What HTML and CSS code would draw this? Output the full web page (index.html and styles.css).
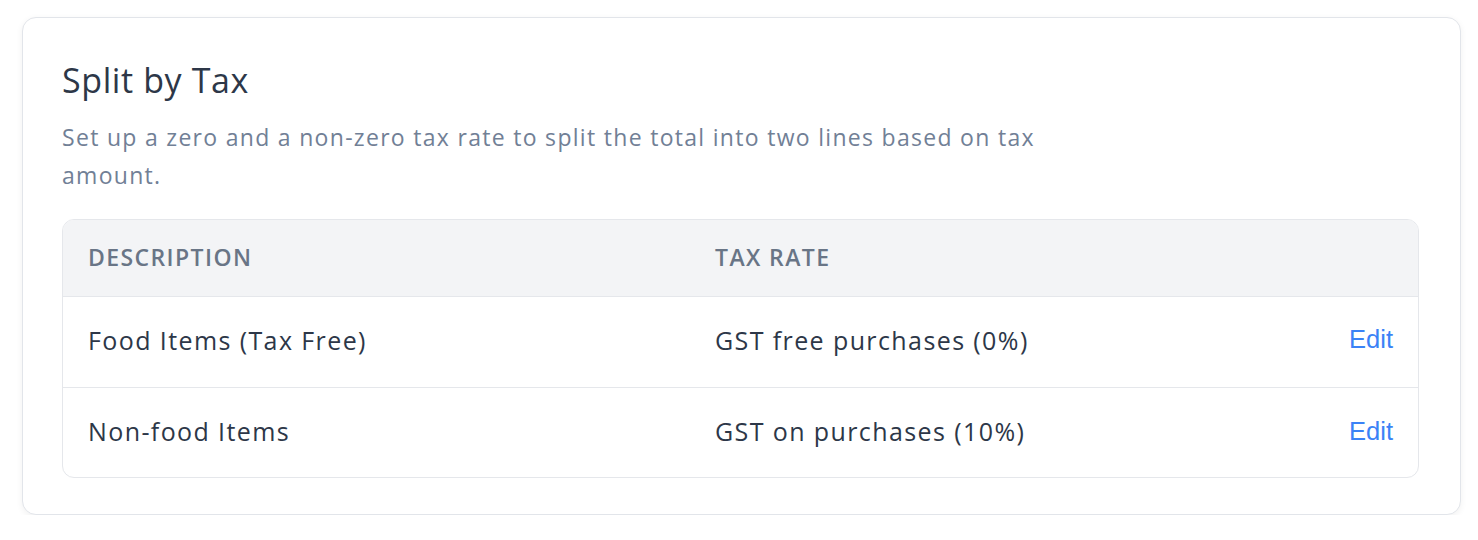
FILE: index.html
```html
<!DOCTYPE html>
<html lang="en">
<head>
<meta charset="utf-8">
<title>Split by Tax</title>
<link rel="stylesheet" href="styles.css">
</head>
<body>
<div class="page">
  <section class="card">
    <h2 class="title">Split by Tax</h2>
    <p class="desc">Set up a zero and a non-zero tax rate to split the total into two lines based on tax amount.</p>
    <div class="table">
      <div class="row head">
        <div class="c-desc">Description</div>
        <div class="c-rate">Tax rate</div>
        <div class="c-act"></div>
      </div>
      <div class="row">
        <div class="c-desc">Food Items (Tax Free)</div>
        <div class="c-rate">GST free purchases (0%)</div>
        <div class="c-act"><a class="edit" href="#">Edit</a></div>
      </div>
      <div class="row">
        <div class="c-desc">Non-food Items</div>
        <div class="c-rate">GST on purchases (10%)</div>
        <div class="c-act"><a class="edit" href="#">Edit</a></div>
      </div>
    </div>
  </section>
</div>
</body>
</html>
```
FILE: styles.css
```css
* { box-sizing: border-box; }
html, body { margin: 0; padding: 0; background: #ffffff; }
body { font-family: "Open Sans", "Noto Sans", sans-serif; color: #2d3748; }
.page { padding: 17px 17px 0 22px; }
.card {
  background: #fff;
  border: 1px solid #e2e5ea;
  border-radius: 14px;
  box-shadow: 0 2px 7px rgba(0,0,0,0.06);
  padding: 36px 41px 36px 39px;
}
.title {
  margin: 0;
  font-size: 34px;
  font-weight: 400;
  line-height: 52px;
  letter-spacing: 0.6px;
  color: #2d3748;
}
.desc {
  margin: 12px 0 25px;
  max-width: 1008px;
  font-size: 23px;
  line-height: 38px;
  letter-spacing: 1.3px;
  color: #718096;
}
.table {
  border: 1px solid #e5e7eb;
  border-radius: 12px;
  overflow: hidden;
}
.row {
  display: grid;
  grid-template-columns: 627px 1fr 120px;
  align-items: center;
  padding: 0 25px 5px;
  height: 91px;
  border-top: 1px solid #e5e7eb;
  font-size: 25px;
  letter-spacing: 1.4px;
  color: #2d3748;
}
.row.head {
  border-top: 0;
  height: 76px;
  padding-bottom: 2px;
  background: #f3f4f6;
  font-size: 23px;
  font-weight: 600;
  letter-spacing: 1.4px;
  text-transform: uppercase;
  color: #697586;
}
.row:last-child { height: 90px; padding-bottom: 3px; }
.c-act { text-align: right; padding-bottom: 3px; }
.edit {
  font-family: "Liberation Sans", Arial, sans-serif;
  font-size: 25.5px;
  letter-spacing: 0;
  color: #3b82f6;
  text-decoration: none;
}
```
